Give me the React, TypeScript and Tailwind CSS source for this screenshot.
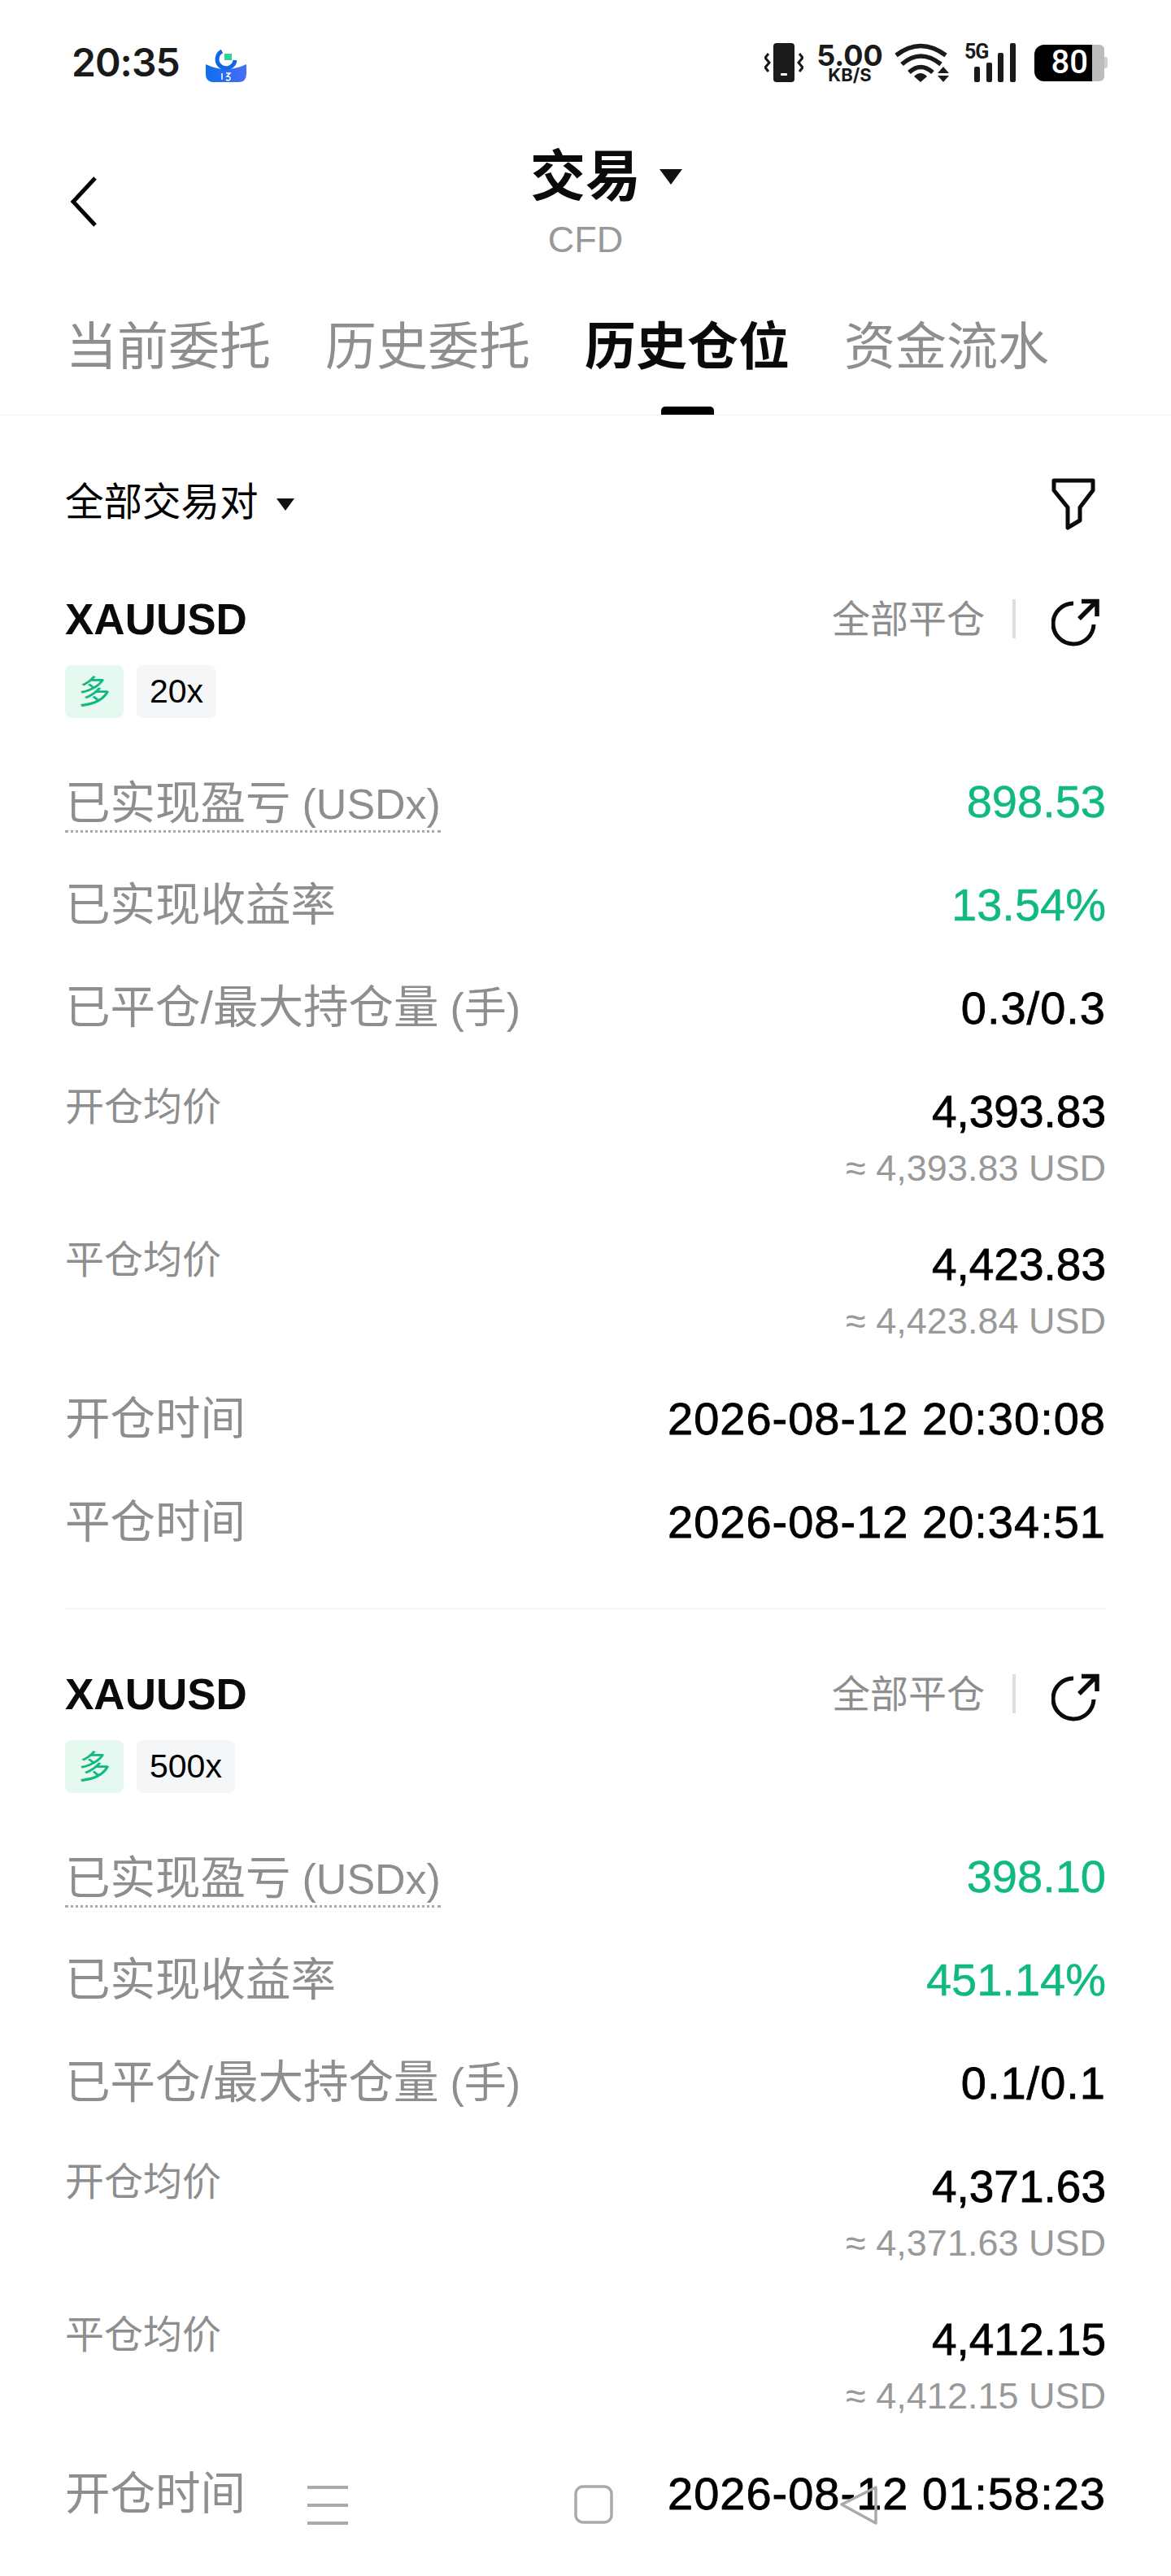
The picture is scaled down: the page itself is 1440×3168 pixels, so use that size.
import React from 'react';

const sans = "font-['Liberation_Sans','Noto_Sans_CJK_SC',sans-serif]";

type Position = {
  leverage: string;
  pnl: string;
  rate: string;
  closed: string;
  openPrice: string;
  openUsd: string;
  closePrice: string;
  closeUsd: string;
  openTime: string;
  closeTime?: string;
};

const positions: Position[] = [
  {
    leverage: '20x',
    pnl: '898.53',
    rate: '13.54%',
    closed: '0.3/0.3',
    openPrice: '4,393.83',
    openUsd: '≈ 4,393.83 USD',
    closePrice: '4,423.83',
    closeUsd: '≈ 4,423.84 USD',
    openTime: '2026-08-12 20:30:08',
    closeTime: '2026-08-12 20:34:51',
  },
  {
    leverage: '500x',
    pnl: '398.10',
    rate: '451.14%',
    closed: '0.1/0.1',
    openPrice: '4,371.63',
    openUsd: '≈ 4,371.63 USD',
    closePrice: '4,412.15',
    closeUsd: '≈ 4,412.15 USD',
    openTime: '2026-08-12 01:58:23',
  },
];

const StatusBar = () => (
  <div className="flex h-[154px] items-center justify-between pl-[88px] pr-[78px]">
    <div className="flex items-center gap-[32px]">
      <span className="font-['Inter',sans-serif] text-[48px] font-semibold leading-none tracking-[-1px] text-[#1a1a1a]">
        20:35
      </span>
      {/* app badge */}
      <svg width="50" height="42" viewBox="0 0 50 42" className="mt-[6px]">
        <defs>
          <linearGradient id="badge" x1="0" x2="1" y1="0" y2="0">
            <stop offset="0" stopColor="#0d6ef0" />
            <stop offset="1" stopColor="#4a6cf7" />
          </linearGradient>
        </defs>
        <path d="M0 20Q25 32 50 20V32Q50 42 40 42H10Q0 42 0 32Z" fill="url(#badge)" />
        <path d="M20 4A11 11 0 1 0 36 15" fill="none" stroke="#0f68e8" strokeWidth="5" />
        <rect x="23" y="7" width="9" height="8" fill="#2fd29b" />
        <path d="M20 31V39M25 31H30L26 35Q31 35 30 38T25 39" fill="none" stroke="#fff" strokeWidth="1.5" />
      </svg>
    </div>

    <div className="flex items-center">
      {/* vibrate */}
      <svg width="48" height="48" viewBox="0 0 48 48" className="text-[#1a1a1a]">
        <rect x="11" y="0" width="26" height="48" rx="4" fill="currentColor" />
        <rect x="20" y="37" width="8" height="3" rx="1" fill="#fff" />
        <path d="M5 13L1 18L6 24L1 30L5 35M43 13L47 18L42 24L47 30L43 35" fill="none" stroke="currentColor" strokeWidth="3" />
      </svg>
      <div className="ml-[18px] flex w-[78px] flex-col items-center font-['Inter',sans-serif] font-bold text-[#1a1a1a]">
        <span className="h-[30px] text-[36px] leading-[30px]">5.00</span>
        <span className="mt-[1px] h-[17px] text-[22px] leading-[17px]">KB/S</span>
      </div>
      {/* wifi */}
      <svg width="67" height="48" viewBox="0 0 67 48" className="ml-[16px] text-[#1a1a1a]">
        <path d="M2 15Q32 -8 63 15M9 26Q32 6 57 26M18 36Q32 23 47 36" fill="none" stroke="currentColor" strokeWidth="5.500" />
        <path d="M24 41Q32 33 40 41L32 48Z" fill="currentColor" />
        <path d="M60 29L67 37H53ZM60 48L67 40H53Z" fill="currentColor" />
      </svg>
      {/* signal */}
      <div className="relative ml-[19px] h-[48px] w-[63px]">
        <svg width="63" height="48" viewBox="0 0 63 48" className="text-[#1a1a1a]">
          <rect x="12" y="29" width="7" height="19" rx="2" fill="currentColor" />
          <rect x="27" y="24" width="7" height="24" rx="2" fill="currentColor" />
          <rect x="41" y="12" width="7" height="36" rx="2" fill="currentColor" />
          <rect x="56" y="0" width="7" height="48" rx="2" fill="currentColor" />
        </svg>
        <span className="absolute left-0 top-[-2px] font-['Roboto',sans-serif] text-[25px] font-bold leading-[25px] tracking-[-1px] text-[#1a1a1a]">
          5G
        </span>
      </div>
      {/* battery */}
      <div className="ml-[23px] flex h-[45px] items-center">
        <div className="flex h-[45px] w-[71px] items-center justify-end rounded-l-[12px] bg-black pr-[5px] font-['Roboto',sans-serif] text-[40px] font-medium leading-none text-white">
          80
        </div>
        <div className="h-[45px] w-[15px] rounded-r-[6px] bg-[#bcbcbc]" />
        <div className="h-[14px] w-[4px] rounded-r-[3px] bg-[#cfcfcf]" />
      </div>
    </div>
  </div>
);

const Header = () => (
  <div className={`${sans} relative flex h-[167px] flex-col items-center pt-[23px]`}>
    <svg width="34" height="62" viewBox="0 0 34 62" className="absolute left-[86px] top-[63px] text-black">
      <path d="M31 2L4 31L31 60" fill="none" stroke="currentColor" strokeWidth="5" />
    </svg>
    <div className="relative h-[80px] text-[68px] font-bold leading-[80px] text-[#0a0a0a]">
      交易
      <svg width="28" height="19" viewBox="0 0 28 19" className="absolute left-[159px] top-[31px]">
        <path d="M0 0H28L14 19Z" fill="#111" />
      </svg>
    </div>
    <div className="mt-[10px] text-[45px] leading-[56px] text-[#999999]">CFD</div>
  </div>
);

const tabs = ['当前委托', '历史委托', '历史仓位', '资金流水'];

const Tabs = () => (
  <div className={`${sans} flex h-[190px] gap-[67px] border-b-[1px] border-[#f0f0f0] pl-[81px] pt-[67px] text-[63px] leading-[76px]`}>
    {tabs.map((tab, i) =>
      i === 2 ? (
        <div key={tab} className="flex flex-col items-center">
          <span className="font-bold text-[#0a0a0a]">{tab}</span>
          <span className="mt-[36px] h-[10px] w-[65px] rounded-t-[5px] bg-black" />
        </div>
      ) : (
        <span key={tab} className="text-[#8e8e8e]">
          {tab}
        </span>
      ),
    )}
  </div>
);

const FilterRow = () => (
  <div className={`${sans} flex h-[214px] items-center justify-between pl-[80px] pr-[93px]`}>
    <div className="flex items-center gap-[22px] text-[47.500px] leading-[60px] text-black">
      全部交易对
      <svg width="22" height="15" viewBox="0 0 22 15" className="mt-[4px]">
        <path d="M0 0H22L11 15Z" fill="#111" />
      </svg>
    </div>
    <svg width="54" height="64" viewBox="0 0 54 64" className="mt-[4px] text-[#0a0a0a]">
      <path d="M3 3H51V15L35 36V52L20 61V36L3 15Z" fill="none" stroke="currentColor" strokeWidth="5" strokeLinejoin="round" />
    </svg>
  </div>
);

const Row = ({ label, unit, value, tone, dotted }: { label: string; unit?: string; value: string; tone?: string; dotted?: boolean }) => (
  <div className="flex h-[127px] items-center justify-between">
    <span className={`text-[55.500px] leading-[64px] text-[#8e8e8e] ${dotted ? 'mt-[8px] border-b-[3px] border-dotted border-[#aaaaaa]' : ''}`}>
      {label}
      {unit && <span className="ml-[14px] text-[52px]">{unit}</span>}
    </span>
    <span className={`text-[56px] leading-[64px] ${tone ?? 'text-black tracking-[1px] [-webkit-text-stroke:0.8px_currentColor]'}`}>{value}</span>
  </div>
);

const PriceBlock = ({ label, price, usd }: { label: string; price: string; usd: string }) => (
  <div className="flex justify-between pb-[48px] first:pt-[32px]">
    <span className="text-[48px] leading-[54px] text-[#8e8e8e]">{label}</span>
    <div className="flex flex-col items-end">
      <span className="text-[55px] leading-[64px] text-black [-webkit-text-stroke:0.8px_currentColor]">{price}</span>
      <span className="text-[45px] leading-[76px] text-[#999999]">{usd}</span>
    </div>
  </div>
);

const green = 'text-[#10b981] [-webkit-text-stroke:0.5px_currentColor]';

const PositionCard = ({ data, last }: { data: Position; last: boolean }) => (
  <section className={`${sans} mx-[80px] ${last ? '' : 'mb-[68px] border-b-[1px] border-[#f0f0f0] pb-[43px]'}`}>
    <div className="flex h-[72px] items-center justify-between">
      <span className="text-[53px] font-bold leading-none text-[#0a0a0a]">XAUUSD</span>
      <div className="flex items-center">
        <span className="text-[47px] leading-none text-[#8e8e8e]">全部平仓</span>
        <span className="ml-[34px] h-[48px] w-[4px] bg-[#dedede]" />
        <svg width="60" height="60" viewBox="0 0 60 60" className="ml-[44px] mr-[7px] mt-[9px] text-[#0a0a0a]">
          <path d="M27 6A25 25 0 1 0 52 32" fill="none" stroke="currentColor" strokeWidth="5" />
          <path d="M34 25L54 5M37 3.500H56V22" fill="none" stroke="currentColor" strokeWidth="5.500" />
        </svg>
      </div>
    </div>
    <div className="mt-[21px] flex gap-[16px]">
      <span className="flex h-[65px] w-[72px] items-center justify-center rounded-[8px] bg-[#e6f9f1] text-[40px] text-[#10b981]">
        多
      </span>
      <span className="flex h-[65px] items-center rounded-[8px] bg-[#f5f6f7] px-[16px] text-[41px] text-black">
        {data.leverage}
      </span>
    </div>
    <div className="mt-[39px]">
      <Row label="已实现盈亏" unit="(USDx)" value={data.pnl} tone={green} dotted />
      <Row label="已实现收益率" value={data.rate} tone={green} />
      <Row label="已平仓/最大持仓量" unit="(手)" value={data.closed} />
      <div>
        <PriceBlock label="开仓均价" price={data.openPrice} usd={data.openUsd} />
        <PriceBlock label="平仓均价" price={data.closePrice} usd={data.closeUsd} />
      </div>
      <div className="-mt-[30px]">
        <Row label="开仓时间" value={data.openTime} />
        {data.closeTime && <Row label="平仓时间" value={data.closeTime} />}
      </div>
    </div>
  </section>
);

// system navigation keys float over the page
const NavKeys = () => (
  <>
    <svg width="50" height="48" viewBox="0 0 50 48" className="absolute left-[378px] top-[3057px] text-[#aaaaaa]">
      <path d="M0 2H50M0 24H50M0 46H50" stroke="currentColor" strokeWidth="4" />
    </svg>
    <svg width="48" height="48" viewBox="0 0 48 48" className="absolute left-[706px] top-[3056px] text-[#aaaaaa]">
      <rect x="2" y="2" width="44" height="44" rx="9" fill="none" stroke="currentColor" strokeWidth="3.500" />
    </svg>
    <svg width="48" height="48" viewBox="0 0 48 48" className="absolute left-[1032px] top-[3057px] text-[#aaaaaa]">
      <path d="M45 2L3 23L45 46Z" fill="none" stroke="currentColor" strokeWidth="3.500" strokeLinejoin="round" />
    </svg>
  </>
);

export default function App() {
  return (
    <div className="relative h-[3168px] w-[1440px] overflow-hidden bg-white">
      <StatusBar />
      <Header />
      <Tabs />
      <FilterRow />
      {positions.map((p, i) => (
        <PositionCard key={p.openTime} data={p} last={i === positions.length - 1} />
      ))}
      <NavKeys />
    </div>
  );
}
